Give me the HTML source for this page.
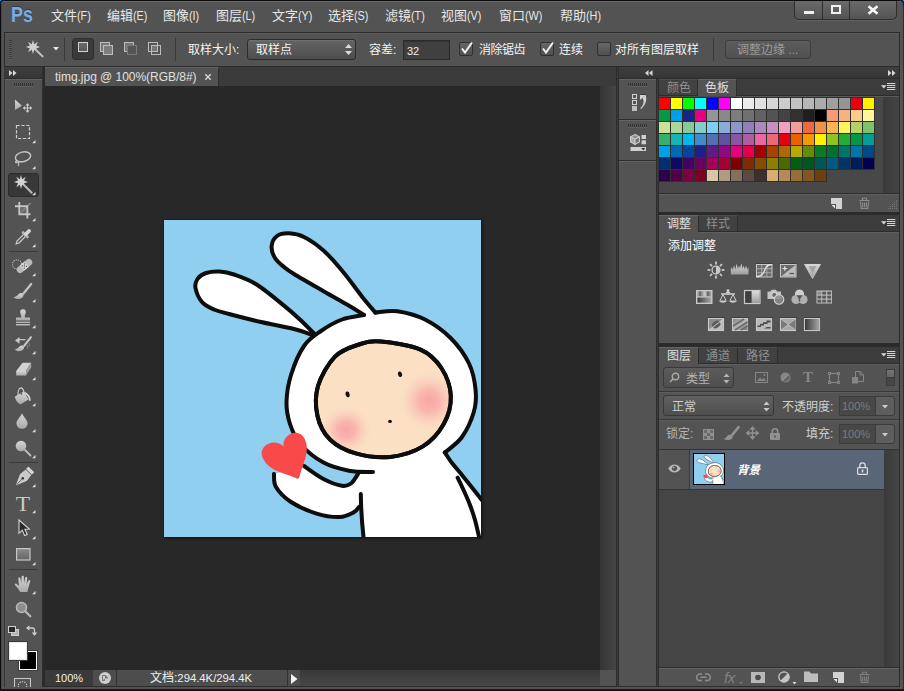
<!DOCTYPE html>
<html><head><meta charset="utf-8"><title>Photoshop</title>
<style>
*{box-sizing:border-box;margin:0;padding:0}
html,body{width:904px;height:691px;overflow:hidden;background:#535353}
body{position:relative;font-family:"Liberation Sans","Noto Sans CJK SC",sans-serif;font-size:12px;color:#e4e4e4}
.a{position:absolute}
.t{position:absolute;white-space:nowrap;line-height:16px;height:16px;margin-top:1px}
.o{color:#f4f4f4;margin-left:1px}
.m{position:absolute;white-space:nowrap;line-height:18px;height:18px;font-size:13px;color:#e8e8e8;top:7px}
.m i{font-style:normal;display:inline-block;font-size:13.5px;transform:scaleX(.8);transform-origin:0 50%;margin-right:-3px}
svg{position:absolute;overflow:visible}
.sel{border:1px solid #2b2b2b;border-radius:3px;background:linear-gradient(#656565,#4d4d4d);box-shadow:inset 0 1px 0 #707070}
.inp{border:1px solid #2b2b2b;background:#404040;box-shadow:inset 0 1px 1px #333}
.cb{width:14px;height:14px;border:1px solid #303030;border-radius:2px;background:linear-gradient(#666,#505050)}
.tabrow{background:#3c3c3c;border-bottom:1px solid #2d2d2d}
.tabon{background:#535353;border-right:1px solid #2d2d2d;border-top:1px solid #656565}
.taboff{background:#414141;border-right:1px solid #2d2d2d;border-bottom:1px solid #2d2d2d;border-top:1px solid #4c4c4c}
.tl{color:#e0e0e0}
.tg{color:#8f8f8f}
.hl{background:#646464;height:1px}
.dk{background:#2d2d2d}
</style></head><body>
<div class="a" style="left:0;top:0;width:904px;height:1px;background:#0a0a0a"></div>
<div class="a" style="left:0;top:0;width:1px;height:691px;background:#0a0a0a"></div>
<div class="a" style="left:903px;top:0;width:1px;height:691px;background:#2e2e2e"></div>
<div class="a" style="left:0;top:689px;width:904px;height:2px;background:#161616"></div>
<div class="a" style="left:1px;top:1px;width:902px;height:1px;background:#6a6a6a"></div>
<div class="a" style="left:1px;top:2px;width:1px;height:687px;background:#484848"></div>
<svg style="left:0;top:0" width="6" height="6"><path d="M0,0H5L0,5Z" fill="#1f8ce6"/><path d="M0,5 A5,5 0 0 1 5,0" fill="none" stroke="#101010" stroke-width="1.6"/></svg>
<svg style="left:898px;top:0" width="6" height="6"><path d="M6,0H1L6,5Z" fill="#1f8ce6"/><path d="M6,5 A5,5 0 0 0 1,0" fill="none" stroke="#101010" stroke-width="1.6"/></svg>
<div class="t" style="left:11px;top:1px;height:26px;line-height:26px;font-size:22px;font-weight:bold;color:#79ade6;transform:scaleX(.81);transform-origin:0 0;text-shadow:0 -1px 0 #2b3a4a">Ps</div>
<div class="m" style="left:51px">文件<i>(F)</i></div>
<div class="m" style="left:107px">编辑<i>(E)</i></div>
<div class="m" style="left:163px">图像<i>(I)</i></div>
<div class="m" style="left:216px">图层<i>(L)</i></div>
<div class="m" style="left:272px">文字<i>(Y)</i></div>
<div class="m" style="left:328px">选择<i>(S)</i></div>
<div class="m" style="left:385px">滤镜<i>(T)</i></div>
<div class="m" style="left:441px">视图<i>(V)</i></div>
<div class="m" style="left:499px">窗口<i>(W)</i></div>
<div class="m" style="left:560px">帮助<i>(H)</i></div>
<div class="a" style="left:794px;top:1px;width:103px;height:19px;border:1px solid #2c2c2c;border-top:none;border-radius:0 0 5px 5px;background:linear-gradient(#6a6a6a,#545454);box-shadow:0 1px 0 #626262"></div>
<div class="a dk" style="left:822px;top:1px;width:1px;height:18px"></div><div class="a dk" style="left:849px;top:1px;width:1px;height:18px"></div>
<div class="a" style="left:804px;top:11px;width:10px;height:3px;background:#f0f0f0"></div>
<div class="a" style="left:831px;top:5px;width:10px;height:9px;border:2px solid #f0f0f0;border-top-width:2px"></div>
<svg style="left:867px;top:5px" width="12" height="10"><path d="M1.5,1.3L10.5,8.7M10.5,1.3L1.5,8.7" stroke="#f4f4f4" stroke-width="2.6"/></svg>
<div class="a" style="left:4px;top:32px;width:896px;height:35px;background:#535353;border:1px solid #2b2b2b;box-shadow:inset 0 1px 0 #5e5e5e"></div>
<div class="a" style="left:9px;top:40px;width:3px;height:20px;background:repeating-linear-gradient(#3a3a3a 0 1px,#5e5e5e 1px 2px)"></div>
<svg style="left:26px;top:40px" width="19" height="19"><g fill="#cfcfcf" stroke="none"><path d="M7,0L8.3,4.2L12,1.8L10.2,5.6L14,7L10.2,8.4L12,12.2L8.3,9.8L7,14L5.7,9.8L2,12.2L3.8,8.4L0,7L3.8,5.6L2,1.8L5.7,4.2Z"/></g><path d="M10.5,10.5L16.6,16.4" stroke="#c4c4c4" stroke-width="2" stroke-linecap="round"/></svg>
<svg style="left:53px;top:47px" width="6" height="4"><path d="M0,0H6L3,3.6Z" fill="#e8e8e8"/></svg>
<div class="a" style="left:64px;top:38px;width:1px;height:23px;background:#3a3a3a"></div>
<div class="a" style="left:72px;top:38px;width:22px;height:22px;background:#3a3a3a;border:1px solid #2f2f2f;border-radius:3px"></div>
<div class="a" style="left:78px;top:42px;width:10px;height:10px;border:1px solid #d0d0d0;background:linear-gradient(#6a6a6a,#585858)"></div>
<div class="a" style="left:100px;top:42px;width:10px;height:10px;border:1px solid #bdbdbd;background:#777"></div><div class="a" style="left:103px;top:45px;width:10px;height:10px;border:1px solid #bdbdbd;background:#7d7d7d"></div>
<div class="a" style="left:124px;top:42px;width:10px;height:10px;border:1px solid #bdbdbd;background:#777"></div><div class="a" style="left:127px;top:45px;width:10px;height:10px;border:1px solid #7a7a7a;background:#555"></div>
<div class="a" style="left:148px;top:42px;width:10px;height:10px;border:1px solid #bdbdbd;background:#555"></div><div class="a" style="left:151px;top:45px;width:10px;height:10px;border:1px solid #bdbdbd;background:transparent"></div><div class="a" style="left:152px;top:46px;width:5px;height:5px;background:#777"></div>
<div class="a" style="left:175px;top:38px;width:1px;height:23px;background:#3a3a3a"></div>
<div class="t o" style="left:187px;top:41px">取样大小:</div>
<div class="a sel" style="left:247px;top:39px;width:109px;height:21px"></div>
<div class="t o" style="left:255px;top:41px">取样点</div>
<svg style="left:345px;top:44px" width="7" height="11"><path d="M0,4L3.5,0L7,4ZM0,7L3.5,11L7,7Z" fill="#dcdcdc"/></svg>
<div class="t o" style="left:368px;top:41px">容差:</div>
<div class="a inp" style="left:403px;top:40px;width:47px;height:20px"></div>
<div class="t" style="left:407px;top:42px;font-size:11px;color:#f0f0f0">32</div>
<div class="a cb" style="left:459px;top:42px"></div>
<svg style="left:459px;top:42px" width="14" height="14"><path d="M3,6.5L6,10.5L13,0.5" fill="none" stroke="#f2f2f2" stroke-width="2"/></svg>
<div class="a cb" style="left:540px;top:42px"></div>
<svg style="left:540px;top:42px" width="14" height="14"><path d="M3,6.5L6,10.5L13,0.5" fill="none" stroke="#f2f2f2" stroke-width="2"/></svg>
<div class="a cb" style="left:597px;top:42px"></div>
<div class="t o" style="left:478px;top:41px;letter-spacing:-0.5px">消除锯齿</div>
<div class="t o" style="left:558px;top:41px">连续</div>
<div class="t o" style="left:614px;top:41px">对所有图层取样</div>
<div class="a" style="left:713px;top:38px;width:1px;height:23px;background:#3a3a3a"></div>
<div class="a" style="left:725px;top:40px;width:86px;height:19px;border:1px solid #3d3d3d;border-radius:3px;background:linear-gradient(#5c5c5c,#505050)"></div>
<div class="t" style="left:737px;top:41px;color:#9b9b9b">调整边缘 ...</div>
<div class="a" style="left:4px;top:67px;width:39px;height:620px;background:#535353;border-left:1px solid #353535;border-right:1px solid #303030"></div>
<div class="a" style="left:5px;top:67px;width:37px;height:11px;background:linear-gradient(#3e3e3e,#353535)"></div>
<div class="a dk" style="left:5px;top:78px;width:37px;height:1px"></div><div class="a hl" style="left:5px;top:79px;width:37px"></div>
<svg style="left:9px;top:70px" width="8" height="6"><path d="M0,0L3.5,3L0,6ZM4,0L7.5,3L4,6Z" fill="#d8d8d8"/></svg>
<div class="a" style="left:14px;top:83px;width:20px;height:3px;background:repeating-linear-gradient(90deg,#333 0 1px,#535353 1px 2px)"></div>
<div class="a" style="left:14px;top:86px;width:20px;height:1px;background:repeating-linear-gradient(90deg,#6a6a6a 0 1px,#535353 1px 2px)"></div>
<defs></defs>
<svg width="0" height="0" style="left:0;top:0"><defs><linearGradient id="tg" x1="0" y1="0" x2="0" y2="1"><stop offset="0" stop-color="#d6d6d6"/><stop offset="1" stop-color="#a9a9a9"/></linearGradient><linearGradient id="tg2" x1="0" y1="0" x2="0" y2="1"><stop offset="0" stop-color="#8a8a8a"/><stop offset="1" stop-color="#666"/></linearGradient></defs></svg>
<svg style="left:14px;top:99px" width="22" height="15"><path d="M1,0.5V11L8,6.8Z" fill="url(#tg)"/><g fill="#d0d0d0"><path d="M13.5,4.2L15.6,6.6H11.4ZM13.5,13.8L15.6,11.4H11.4ZM8.7,9L11.1,6.9V11.1ZM18.3,9L15.9,6.9V11.1Z"/></g><path d="M13.5,6V12M10.5,9H16.5" stroke="#d0d0d0" stroke-width="1.1"/></svg>
<svg style="left:16px;top:125px" width="15" height="15"><rect x="0.5" y="0.5" width="13" height="13" fill="none" stroke="#cfcfcf" stroke-width="1.2" stroke-dasharray="3.2 1.7"/></svg>
<svg style="left:31.7px;top:140px" width="4" height="4"><path d="M3.5,0V3.3H0.1Z" fill="#dcdcdc"/></svg>
<svg style="left:13px;top:150px" width="20" height="18"><ellipse cx="10" cy="6.8" rx="7.8" ry="4.8" fill="none" stroke="#c4c4c4" stroke-width="1.5" transform="rotate(-14 10 6.8)"/><path d="M3.8,11.2C2,11.5 2.2,13.2 4,12.6C5.8,12 6.3,13.8 5.2,16" fill="none" stroke="#c4c4c4" stroke-width="1.2"/></svg>
<svg style="left:31.7px;top:166px" width="4" height="4"><path d="M3.5,0V3.3H0.1Z" fill="#dcdcdc"/></svg>
<div class="a" style="left:8px;top:173px;width:31px;height:24px;background:#383838;border:1px solid #2c2c2c;border-radius:3px"></div>
<svg style="left:14px;top:175px" width="21" height="21"><path d="M7,0L8.2,4.3L11.7,1.7L10,5.6L14,7L10,8.3L11.7,12.3L8.2,9.7L7,14L5.8,9.7L2.3,12.3L4,8.3L0,7L4,5.6L2.3,1.7L5.8,4.3Z" fill="#d2d2d2"/><path d="M10.5,10.5L17.6,17.6" stroke="#b4b4b4" stroke-width="2.2" stroke-linecap="round"/></svg>
<svg style="left:31.7px;top:192px" width="4" height="4"><path d="M3.5,0V3.3H0.1Z" fill="#dcdcdc"/></svg>
<svg style="left:15px;top:202px" width="16" height="17"><path d="M4.3,0V12.3H15.5M0,4.3H12.3V16.5" fill="none" stroke="#c6c6c6" stroke-width="1.9"/><path d="M15.5,1L6,10.5" stroke="#bdbdbd" stroke-width="1"/><rect x="5.8" y="5.8" width="5" height="5" fill="#6e6e6e"/><path d="M10.5,6L6,10.5" stroke="#a0a0a0" stroke-width=".8"/></svg>
<svg style="left:31.7px;top:218px" width="4" height="4"><path d="M3.5,0V3.3H0.1Z" fill="#dcdcdc"/></svg>
<svg style="left:15px;top:228px" width="17" height="17"><path d="M1.2,15.8L2,13L9,6L11,8L4,15Z" fill="none" stroke="#cdcdcd" stroke-width="1.2"/><path d="M8,4.5L12.5,9" stroke="#b5b5b5" stroke-width="2.6" stroke-linecap="round"/><path d="M11,6L14,3" stroke="#d6d6d6" stroke-width="3.8" stroke-linecap="round"/></svg>
<svg style="left:31.7px;top:244px" width="4" height="4"><path d="M3.5,0V3.3H0.1Z" fill="#dcdcdc"/></svg>
<div class="a" style="left:9px;top:251px;width:29px;height:1px;background:#3b3b3b"></div>
<div class="a" style="left:9px;top:462px;width:29px;height:1px;background:#3b3b3b"></div>
<div class="a" style="left:9px;top:569px;width:29px;height:1px;background:#3b3b3b"></div>
<svg style="left:11px;top:258px" width="22" height="16"><circle cx="6" cy="6.5" r="4.6" fill="none" stroke="#d0d0d0" stroke-width="1.1" stroke-dasharray="1 1.2"/><g transform="rotate(-40 13.5 8)"><rect x="4.5" y="4.6" width="18" height="6.8" rx="3.2" fill="#b9b9b9"/><rect x="10.5" y="4.6" width="6" height="6.8" fill="#d6d6d6"/><g fill="#666"><circle cx="12" cy="6.5" r=".7"/><circle cx="15" cy="6.5" r=".7"/><circle cx="12" cy="9.5" r=".7"/><circle cx="15" cy="9.5" r=".7"/><circle cx="13.5" cy="8" r=".7"/></g></g></svg>
<svg style="left:31.7px;top:273px" width="4" height="4"><path d="M3.5,0V3.3H0.1Z" fill="#dcdcdc"/></svg>
<svg style="left:13px;top:283px" width="20" height="17"><path d="M18.2,1L10.5,10.5" stroke="#c4c4c4" stroke-width="2.2" stroke-linecap="round"/><path d="M0.5,14.2C3,13.8 4.5,12.5 5.8,11C7.3,9.3 9.8,9.6 10.5,11.8C10.8,14.5 7.5,16.3 4.5,16C2.8,15.8 1.3,15 0.5,14.2Z" fill="url(#tg)"/></svg>
<svg style="left:31.7px;top:299px" width="4" height="4"><path d="M3.5,0V3.3H0.1Z" fill="#dcdcdc"/></svg>
<svg style="left:15px;top:309px" width="16" height="17"><path d="M8,0.3C10.3,0.3 11.2,2 10.8,3.8C10.4,5.3 9.8,6 9.8,8.5H15V11.5H1V8.5H6.2C6.2,6 5.6,5.3 5.2,3.8C4.8,2 5.7,0.3 8,0.3Z" fill="url(#tg)"/><rect x="1" y="12.7" width="14" height="1.2" fill="#c4c4c4"/><rect x="1" y="15" width="14" height="1.4" fill="#c4c4c4"/></svg>
<svg style="left:31.7px;top:325px" width="4" height="4"><path d="M3.5,0V3.3H0.1Z" fill="#dcdcdc"/></svg>
<svg style="left:14px;top:336px" width="20" height="17"><path d="M17,1.2L10,10" stroke="#c4c4c4" stroke-width="2.1" stroke-linecap="round"/><path d="M0.8,13.5C3,13.2 4.3,12 5.5,10.6C7,9 9.3,9.3 10,11.3C10.3,13.8 7.2,15.5 4.3,15.2C2.8,15 1.5,14.3 0.8,13.5Z" fill="url(#tg)"/><path d="M1,4.5L5.5,1V3H11.5V4.2H5.5V7.8Z" fill="#c6c6c6"/><path d="M13.5,9.5V13M15.3,7.5V11.5" stroke="#b0b0b0" stroke-width="0.9" stroke-dasharray="1 1"/></svg>
<svg style="left:31.7px;top:351px" width="4" height="4"><path d="M3.5,0V3.3H0.1Z" fill="#dcdcdc"/></svg>
<svg style="left:15px;top:362px" width="17" height="15"><path d="M7.5,0.8H16.2L11,9H1.2Z" fill="#d2d2d2"/><path d="M1.2,9H11V13.6H1.2Z" fill="url(#tg)"/><path d="M11,9L16.2,0.8V5.5L11,13.6Z" fill="#9d9d9d"/></svg>
<svg style="left:31.7px;top:377px" width="4" height="4"><path d="M3.5,0V3.3H0.1Z" fill="#dcdcdc"/></svg>
<svg style="left:14px;top:387px" width="19" height="18"><path d="M4.2,9.3C3.6,5 4.6,1.2 6.8,0.8C9,0.6 10,4 10,6.8" fill="none" stroke="#cfcfcf" stroke-width="1.2"/><path d="M1,9.6L9.8,4.6L14.6,12.6L6.6,17.2C4.5,17.6 0.6,12 1,9.6Z" fill="url(#tg)"/><path d="M10,4.7C13.5,5.8 16.3,8.5 16.6,12.5C16.8,14.3 15.3,14.6 15,13C14.8,10.6 13.6,8.6 11.6,7.4Z" fill="#d8d8d8"/><circle cx="7.4" cy="6.8" r="0.9" fill="#555"/></svg>
<svg style="left:31.7px;top:403px" width="4" height="4"><path d="M3.5,0V3.3H0.1Z" fill="#dcdcdc"/></svg>
<svg style="left:16px;top:413px" width="12" height="16"><path d="M6,0.3C7.5,4 11.6,7 11.6,10.6A5.6,5.2 0 0 1 0.4,10.6C0.4,7 4.5,4 6,0.3Z" fill="url(#tg)"/></svg>
<svg style="left:31.7px;top:429px" width="4" height="4"><path d="M3.5,0V3.3H0.1Z" fill="#dcdcdc"/></svg>
<svg style="left:15px;top:440px" width="17" height="17"><circle cx="6" cy="6" r="5.3" fill="url(#tg)"/><path d="M10,10L15.5,15.5" stroke="#bcbcbc" stroke-width="1.8" stroke-linecap="round"/></svg>
<svg style="left:31.7px;top:455px" width="4" height="4"><path d="M3.5,0V3.3H0.1Z" fill="#dcdcdc"/></svg>
<svg style="left:14px;top:468px" width="19" height="18"><g transform="translate(-0.5,0.5) rotate(44 11 7) scale(1.06)"><rect x="7.2" y="-2" width="7.6" height="3.2" rx=".6" fill="#d4d4d4"/><path d="M7.6,2.2H14.4L15.2,8.5L11,18.2L6.8,8.5Z" fill="#c9c9c9" stroke="#e0e0e0" stroke-width=".6"/><path d="M11,18V10.5" stroke="#666" stroke-width=".8"/><circle cx="11" cy="9.6" r="1.2" fill="#333"/></g></svg>
<svg style="left:31.7px;top:484px" width="4" height="4"><path d="M3.5,0V3.3H0.1Z" fill="#dcdcdc"/></svg>
<div class="t" style="left:15px;top:492px;width:16px;height:22px;line-height:22px;font-family:'Liberation Serif',serif;font-size:21px;color:#c9c9c9;text-align:center;transform:scaleX(1.12)">T</div>
<svg style="left:31.7px;top:510px" width="4" height="4"><path d="M3.5,0V3.3H0.1Z" fill="#dcdcdc"/></svg>
<svg style="left:18px;top:519px" width="12" height="18"><path d="M1,1V14.3L4.3,11.2L6.6,16.6L9.2,15.5L6.9,10.2L11.3,10Z" fill="#2a2a2a" stroke="#d6d6d6" stroke-width="1.1" stroke-linejoin="miter"/></svg>
<svg style="left:31.7px;top:536px" width="4" height="4"><path d="M3.5,0V3.3H0.1Z" fill="#dcdcdc"/></svg>
<svg style="left:16px;top:548px" width="15" height="14"><rect x="0.6" y="0.6" width="13.4" height="11.4" fill="url(#tg2)" stroke="#c6c6c6" stroke-width="1.2"/></svg>
<svg style="left:31.7px;top:562px" width="4" height="4"><path d="M3.5,0V3.3H0.1Z" fill="#dcdcdc"/></svg>
<svg style="left:14px;top:575px" width="18" height="18"><path d="M6.2,17C5,14.5 2.6,12 0.9,10C0.2,8.8 1.6,7.8 2.8,8.9L5,11L4.3,3.6C4.2,2.2 6.2,2 6.4,3.5L7.2,8.3L7.6,1.8C7.7,0.3 9.8,0.3 9.8,1.8L10,8.3L11.2,2.8C11.5,1.4 13.4,1.7 13.2,3.2L12.6,9L14.4,5.6C15,4.4 16.8,5 16.2,6.6C15.2,9.6 14.6,12.5 13.4,17Z" fill="url(#tg)"/></svg>
<svg style="left:31.7px;top:591px" width="4" height="4"><path d="M3.5,0V3.3H0.1Z" fill="#dcdcdc"/></svg>
<svg style="left:15px;top:601px" width="17" height="17"><circle cx="6.5" cy="6.5" r="5" fill="#8e8e8e" stroke="#b9b9b9" stroke-width="1.6"/><path d="M10.5,10.5L15.3,15.3" stroke="#b9b9b9" stroke-width="2.2" stroke-linecap="round"/></svg>
<svg style="left:8px;top:626px" width="11" height="10"><rect x="3.5" y="3.5" width="7" height="6" fill="#b4b4b4" stroke="#cfcfcf"/><rect x="0.5" y="0.5" width="7" height="6" fill="#2b2b2b" stroke="#cfcfcf"/></svg>
<svg style="left:26px;top:625px" width="11" height="11"><path d="M2.5,3H6.5C8,3 8.5,3.8 8.5,5V8.5" fill="none" stroke="#cdcdcd" stroke-width="1.3"/><path d="M0,3L3.4,0.3V5.7Z" fill="#cdcdcd"/><path d="M8.5,11L5.8,7.6H11.2Z" fill="#cdcdcd"/></svg>
<div class="a" style="left:19px;top:651px;width:18px;height:19px;background:#000;border:1px solid #fff;outline:1px solid #3a3a3a"></div>
<div class="a" style="left:9px;top:642px;width:18px;height:18px;background:#fff;border:1px solid #e8e8e8;outline:1px solid #3a3a3a"></div>
<svg style="left:14px;top:678px;overflow:hidden" width="17" height="9"><rect x="0.5" y="0.5" width="16" height="10" fill="none" stroke="#c6c6c6" stroke-width="1.1"/><circle cx="8.5" cy="8" r="4.3" fill="none" stroke="#d0d0d0" stroke-width="1.1" stroke-dasharray="1.2 1.2"/></svg>
<div class="a" style="left:43px;top:67px;width:573px;height:19px;background:#3b3b3b"></div>
<div class="a" style="left:43px;top:67px;width:2px;height:620px;background:#2a2a2a"></div>
<div class="a" style="left:45px;top:67px;width:174px;height:19px;background:#535353;border-top:1px solid #636363;border-right:1px solid #2e2e2e"></div>
<div class="t" style="left:55px;top:68px;color:#e0e0e0;letter-spacing:-0.03px">timg.jpg @ 100%(RGB/8#)</div>
<svg style="left:205px;top:74px" width="6" height="6"><path d="M0.3,0.3L5.7,5.7M5.7,0.3L0.3,5.7" stroke="#dcdcdc" stroke-width="1.3"/></svg>
<div class="a" style="left:45px;top:86px;width:555px;height:584px;background:#282828"></div>
<div class="a" style="left:600px;top:86px;width:16px;height:584px;background:linear-gradient(90deg,#353535,#454545)"></div>
<div class="a" style="left:164px;top:220px;width:317px;height:317px;box-shadow:1px 1px 3px rgba(0,0,0,.6),0 0 1px #111"></div>
<svg style="left:164px;top:220px;overflow:hidden" width="317" height="317" viewBox="0 0 317 317"><defs><radialGradient id="bl"><stop offset="0" stop-color="#f8a3a3" stop-opacity=".95"/><stop offset=".35" stop-color="#f9aaa8" stop-opacity=".8"/><stop offset=".7" stop-color="#fac0b4" stop-opacity=".4"/><stop offset="1" stop-color="#fad6c0" stop-opacity="0"/></radialGradient><g id="bunny"><rect width="317" height="317" fill="#90cff0"/><path d="M197,272L199,317H317V279L296.8,253.6L281,232L209,245Z" fill="#fff"/><path d="M140.0,246.0 L159.5,259.0 L178.0,265.8 L187.0,263.5 L194.0,254.0 L210.0,254.0 L200.0,288.0 L195.4,286.6 L189.6,292.4 L175.7,297.0 L152.6,293.6 L127.0,282.0 L112.0,267.0 L110.0,254.0Z" fill="#fff"/><path d="M209.0,252.0 L185.0,250.7 L159.5,242.6 L136.4,224.0 L126.0,204.0 L122.5,182.0 L127.0,155.0 L140.0,126.0 L157.0,111.0 L178.0,99.5 L200.0,95.0 L203.0,88.0 L209.0,87.0 L211.4,92.6 L233.4,91.2 L261.0,99.5 L286.6,118.0 L305.0,143.5 L311.6,170.0 L309.8,192.0 L298.0,217.0 L280.8,232.5Z" fill="#fff"/><path d="M152.5,116.0C149.9,113.4 142.4,105.6 137.0,100.5C131.6,95.4 127.4,91.6 120.0,85.6C112.6,79.6 100.9,69.7 92.6,64.5C84.3,59.3 76.2,56.7 70.0,54.5C63.8,52.3 60.2,51.8 55.5,51.5C50.8,51.2 45.7,51.8 42.0,53.0C38.3,54.2 35.2,56.5 33.5,59.0C31.8,61.5 30.8,64.2 31.5,68.0C32.2,71.8 34.9,78.4 38.0,82.0C41.1,85.6 45.5,87.5 50.0,89.5C54.5,91.5 57.2,91.9 65.0,94.0C72.8,96.1 86.2,99.5 97.0,102.0C107.8,104.5 121.0,106.7 130.0,109.0C139.0,111.3 147.5,114.8 151.0,116.0Z" fill="#fff" stroke="#0d0d0d" stroke-width="4" stroke-linejoin="round"/><path d="M211.4,92.6C209.3,90.1 203.9,84.1 198.7,77.5C193.5,70.9 186.4,60.8 180.0,53.0C173.6,45.2 166.7,37.0 160.0,31.0C153.3,25.0 145.8,19.9 140.0,17.0C134.2,14.1 129.5,13.5 125.0,13.3C120.5,13.1 115.9,13.9 113.0,16.0C110.1,18.1 107.9,22.3 107.6,26.0C107.3,29.7 108.9,34.5 111.0,38.0C113.1,41.5 116.8,44.3 120.0,47.0C123.2,49.7 123.3,49.9 130.0,54.0C136.7,58.1 151.2,66.4 160.0,71.5C168.8,76.6 176.3,80.6 183.0,84.5C189.7,88.4 197.2,93.2 200.0,95.0" fill="#fff" stroke="#0d0d0d" stroke-width="4" stroke-linejoin="round" stroke-linecap="round"/><path d="M199,97.5L212,95L215,110L190,112Z" fill="#fff"/><path d="M151,114L158,108L175,125L150,130Z" fill="#fff"/><path d="M200.0,95.0C196.3,95.8 185.2,96.8 178.0,99.5C170.8,102.2 163.3,106.6 157.0,111.0C150.7,115.4 145.0,118.7 140.0,126.0C135.0,133.3 129.9,145.7 127.0,155.0C124.1,164.3 122.7,173.8 122.5,182.0C122.3,190.2 123.7,197.0 126.0,204.0C128.3,211.0 130.8,217.6 136.4,224.0C142.0,230.4 151.4,238.2 159.5,242.6C167.6,247.0 176.8,249.1 185.0,250.7C193.2,252.3 205.0,251.8 209.0,252.0" fill="none" stroke="#0d0d0d" stroke-width="4" stroke-linecap="round" stroke-linejoin="round"/><path d="M211.4,92.6C215.1,92.4 225.1,90.0 233.4,91.2C241.7,92.4 252.1,95.0 261.0,99.5C269.9,104.0 279.3,110.7 286.6,118.0C293.9,125.3 300.8,134.8 305.0,143.5C309.2,152.2 310.8,161.9 311.6,170.0C312.4,178.1 312.1,184.2 309.8,192.0C307.5,199.8 302.8,210.2 298.0,217.0C293.2,223.8 283.7,229.9 280.8,232.5" fill="none" stroke="#0d0d0d" stroke-width="4" stroke-linecap="round" stroke-linejoin="round"/><path d="M140.0,246.0C143.2,248.2 153.2,255.7 159.5,259.0C165.8,262.3 173.4,265.1 178.0,265.8C182.6,266.6 184.3,265.5 187.0,263.5C189.7,261.5 192.8,255.6 194.0,254.0" fill="none" stroke="#0d0d0d" stroke-width="4" stroke-linecap="round" stroke-linejoin="round"/><path d="M110.0,254.0C110.3,256.2 109.2,262.3 112.0,267.0C114.8,271.7 120.2,277.6 127.0,282.0C133.8,286.4 144.5,291.1 152.6,293.6C160.7,296.1 169.5,297.2 175.7,297.0C181.9,296.8 186.3,294.1 189.6,292.4C192.9,290.7 194.4,287.6 195.4,286.6" fill="none" stroke="#0d0d0d" stroke-width="4" stroke-linecap="round" stroke-linejoin="round"/><path d="M196.8,274C197,288 197.8,302 199.5,317" fill="none" stroke="#0d0d0d" stroke-width="4" stroke-linecap="round" stroke-linejoin="round"/><path d="M280.8,232.5C282.0,234.2 285.3,239.5 288.0,243.0C290.7,246.5 293.8,249.9 296.8,253.6C299.8,257.3 302.3,260.4 306.0,265.0C309.7,269.6 316.8,278.8 319.0,281.5" fill="none" stroke="#0d0d0d" stroke-width="4" stroke-linecap="round" stroke-linejoin="round"/><path d="M293.6,257.7C294.7,259.9 297.9,266.4 300.0,271.0C302.1,275.6 304.2,280.2 306.0,285.0C307.8,289.8 309.4,294.3 311.0,300.0C312.6,305.7 314.8,315.8 315.5,319.0" fill="none" stroke="#0d0d0d" stroke-width="4" stroke-linecap="round" stroke-linejoin="round"/><path d="M217.0,121.5C227.2,122.3 246.4,125.2 256.5,129.6C266.6,134.0 272.3,140.3 277.4,148.0C282.4,155.7 286.4,166.7 286.8,176.0C287.2,185.3 284.4,195.6 279.7,204.0C275.0,212.4 267.8,220.9 258.9,226.4C250.0,231.9 237.6,235.7 226.4,236.9C215.2,238.1 201.8,236.3 191.7,233.4C181.6,230.5 172.4,225.7 166.0,219.5C159.6,213.3 155.5,204.9 153.5,196.0C151.5,187.1 151.1,175.9 154.0,166.0C156.9,156.1 164.2,143.5 171.0,136.6C177.8,129.7 187.3,127.0 195.0,124.5C202.7,122.0 206.8,120.7 217.0,121.5Z" fill="#fbe0c4" stroke="#0d0d0d" stroke-width="4"/><clipPath id="fc"><path d="M217.0,121.5C227.2,122.3 246.4,125.2 256.5,129.6C266.6,134.0 272.3,140.3 277.4,148.0C282.4,155.7 286.4,166.7 286.8,176.0C287.2,185.3 284.4,195.6 279.7,204.0C275.0,212.4 267.8,220.9 258.9,226.4C250.0,231.9 237.6,235.7 226.4,236.9C215.2,238.1 201.8,236.3 191.7,233.4C181.6,230.5 172.4,225.7 166.0,219.5C159.6,213.3 155.5,204.9 153.5,196.0C151.5,187.1 151.1,175.9 154.0,166.0C156.9,156.1 164.2,143.5 171.0,136.6C177.8,129.7 187.3,127.0 195.0,124.5C202.7,122.0 206.8,120.7 217.0,121.5Z"/></clipPath><g clip-path="url(#fc)"><ellipse cx="265" cy="181" rx="30" ry="30" fill="url(#bl)"/><ellipse cx="182" cy="210" rx="26" ry="24" fill="url(#bl)"/></g><path d="M217.0,121.5C227.2,122.3 246.4,125.2 256.5,129.6C266.6,134.0 272.3,140.3 277.4,148.0C282.4,155.7 286.4,166.7 286.8,176.0C287.2,185.3 284.4,195.6 279.7,204.0C275.0,212.4 267.8,220.9 258.9,226.4C250.0,231.9 237.6,235.7 226.4,236.9C215.2,238.1 201.8,236.3 191.7,233.4C181.6,230.5 172.4,225.7 166.0,219.5C159.6,213.3 155.5,204.9 153.5,196.0C151.5,187.1 151.1,175.9 154.0,166.0C156.9,156.1 164.2,143.5 171.0,136.6C177.8,129.7 187.3,127.0 195.0,124.5C202.7,122.0 206.8,120.7 217.0,121.5Z" fill="none" stroke="#0d0d0d" stroke-width="4"/><ellipse cx="183.6" cy="174.4" rx="2" ry="2.9" fill="#111" transform="rotate(-12 183.6 174.4)"/><ellipse cx="236" cy="154.2" rx="2" ry="2.8" fill="#111" transform="rotate(-15 236 154.2)"/><ellipse cx="226" cy="201.4" rx="1.9" ry="1.6" fill="#111"/><path transform="translate(119.5,226.6) rotate(-24)" d="M0,0C-3,-11.5 -23.5,-13 -23.5,2.5C-23.5,17 -8,25.5 -1,34.5Q0.5,36 2,34.5C9,25 22.5,16 22.5,2.5C22.5,-12.5 3,-11.5 0,0Z" fill="#f94a4a"/></g></defs><use href="#bunny"/></svg>
<div class="a" style="left:45px;top:670px;width:571px;height:16px;background:linear-gradient(#393939,#474747)"></div>
<div class="a" style="left:45px;top:670px;width:48px;height:16px;background:#3a3a3a"></div>
<div class="a" style="left:93px;top:670px;width:23px;height:16px;background:#4d4d4d"></div>
<div class="a" style="left:116px;top:670px;width:1px;height:16px;background:#333"></div>
<div class="a" style="left:117px;top:670px;width:170px;height:16px;background:#4d4d4d"></div>
<div class="a" style="left:287px;top:670px;width:1px;height:16px;background:#333"></div>
<div class="a" style="left:288px;top:670px;width:12px;height:16px;background:#4d4d4d"></div>
<div class="a" style="left:600px;top:670px;width:16px;height:16px;background:#535353"></div>
<div class="a" style="left:45px;top:686px;width:571px;height:1px;background:#2b2b2b"></div>
<div class="t" style="left:55px;top:669px;font-size:11px;color:#f0f0f0">100%</div>
<svg style="left:99px;top:672px" width="12" height="12"><circle cx="6" cy="6" r="6" fill="#cdcdcd"/><path d="M3,9V3H6.5L9,5.5V6.5H6V9Z" fill="#7a7a7a"/><path d="M4,8V4H6V6.5" fill="#cdcdcd"/></svg>
<div class="t" style="left:150px;top:669px;color:#f0f0f0">文档:<span style="font-size:11.3px">294.4K/294.4K</span></div>
<svg style="left:291px;top:674px" width="7" height="10"><path d="M0,0L6.5,5L0,10Z" fill="#f4f4f4"/></svg>
<div class="a" style="left:616px;top:67px;width:3px;height:620px;background:linear-gradient(90deg,#2c2c2c 0 1px,#3b3b3b 1px 2px,#2c2c2c 2px)"></div>
<div class="a" style="left:619px;top:67px;width:281px;height:11px;background:linear-gradient(#3f3f3f,#353535)"></div>
<div class="a dk" style="left:619px;top:78px;width:281px;height:1px"></div>
<svg style="left:645px;top:70px" width="8" height="6"><path d="M3.5,0L0,3L3.5,6ZM7.5,0L4,3L7.5,6Z" fill="#d8d8d8"/></svg>
<svg style="left:888px;top:70px" width="8" height="6"><path d="M0,0L3.5,3L0,6ZM4,0L7.5,3L4,6Z" fill="#d8d8d8"/></svg>
<div class="a" style="left:656px;top:79px;width:3px;height:608px;background:linear-gradient(90deg,#2c2c2c 0 1px,#3b3b3b 1px 2px,#2c2c2c 2px)"></div>
<div class="a" style="left:899px;top:67px;width:1px;height:620px;background:#2b2b2b"></div>
<div class="a hl" style="left:619px;top:79px;width:37px"></div>
<div class="a dk" style="left:619px;top:119px;width:37px;height:1px"></div><div class="a hl" style="left:619px;top:120px;width:37px"></div>
<div class="a dk" style="left:619px;top:160px;width:37px;height:1px"></div><div class="a hl" style="left:619px;top:161px;width:37px"></div>
<div class="a" style="left:628px;top:83px;width:20px;height:3px;background:repeating-linear-gradient(90deg,#333 0 1px,#535353 1px 2px)"></div>
<div class="a" style="left:628px;top:86px;width:20px;height:1px;background:repeating-linear-gradient(90deg,#6a6a6a 0 1px,#535353 1px 2px)"></div>
<div class="a" style="left:628px;top:124px;width:20px;height:3px;background:repeating-linear-gradient(90deg,#333 0 1px,#535353 1px 2px)"></div>
<div class="a" style="left:628px;top:127px;width:20px;height:1px;background:repeating-linear-gradient(90deg,#6a6a6a 0 1px,#535353 1px 2px)"></div>
<svg style="left:632px;top:94px" width="15" height="17"><g fill="none" stroke="#d0d0d0" stroke-width="1"><rect x="0.5" y="0.5" width="4" height="4"/><rect x="0.5" y="6.5" width="4" height="4"/></g><rect x="0" y="12" width="5" height="5" fill="#bdbdbd"/><path d="M8,1H13.9L8,6Z" fill="#d2d2d2"/><path d="M13.8,1.1C14.8,5 14.6,10.5 8.9,15.2L8.4,14.3C11.6,10.8 12.6,7 10.4,4Z" fill="#d2d2d2"/><path d="M8,0.5H14" stroke="#333" stroke-width="0.8"/></svg>
<svg style="left:630px;top:134px" width="17" height="18"><path d="M5,0.6L9.4,2.8L5,5.2L0.6,2.8Z" fill="#8e8e8e"/><path d="M0.6,2.8L5,5.2V10.4L0.6,8Z" fill="#a9a9a9"/><path d="M9.4,2.8L5,5.2V10.4L9.4,8Z" fill="#747474"/><g fill="none" stroke="#d0d0d0" stroke-width="1.1"><path d="M5,0.6L9.4,2.8V8L5,10.4L0.6,8V2.8Z"/><path d="M0.6,2.8L5,5.2L9.4,2.8M5,5.2V10.4"/></g><rect x="11.5" y="1" width="4.5" height="4" fill="#cfcfcf"/><rect x="11.5" y="6.3" width="4.5" height="4" fill="#cfcfcf"/><rect x="0.5" y="13" width="15.5" height="4" fill="#cfcfcf"/><path d="M11.5,14L15,14L13.2,16.5Z" fill="#222"/></svg>
<div class="a tabrow" style="left:659px;top:79px;width:240px;height:17px"></div>
<div class="a taboff" style="left:659px;top:79px;width:39px;height:17px"></div>
<div class="a tabon" style="left:698px;top:79px;width:39px;height:17px"></div>
<div class="t tg" style="left:667px;top:79px">颜色</div>
<div class="t tl" style="left:705px;top:79px">色板</div>
<svg style="left:881px;top:83px" width="14" height="9"><path d="M0,2.3H5.6L2.8,5.6Z" fill="#d8d8d8"/><path d="M6,0.5H14.3M6,2.5H14.3M6,4.5H14.3M6,6.5H14.3" stroke="#d4d4d4" stroke-width="1"/></svg>
<div class="a" style="left:659px;top:96px;width:240px;height:97px;background:#484848"></div>
<div class="a hl" style="left:737px;top:96px;width:162px;background:#5a5a5a"></div>
<div class="a" style="left:883px;top:97px;width:16px;height:96px;background:linear-gradient(90deg,#3a3a3a,#444)"></div>
<div class="a" style="left:658px;top:97px;width:217px;height:13px;background:#303030"></div>
<div class="a" style="left:658px;top:109px;width:217px;height:13px;background:#303030"></div>
<div class="a" style="left:658px;top:121px;width:217px;height:13px;background:#303030"></div>
<div class="a" style="left:658px;top:133px;width:217px;height:13px;background:#303030"></div>
<div class="a" style="left:658px;top:145px;width:217px;height:13px;background:#303030"></div>
<div class="a" style="left:658px;top:157px;width:217px;height:13px;background:#303030"></div>
<div class="a" style="left:658px;top:169px;width:169px;height:13px;background:#303030"></div>
<div class="a" style="left:659px;top:98px;width:11px;height:11px;background:#ff0000"></div>
<div class="a" style="left:671px;top:98px;width:11px;height:11px;background:#ffff00"></div>
<div class="a" style="left:683px;top:98px;width:11px;height:11px;background:#00ff00"></div>
<div class="a" style="left:695px;top:98px;width:11px;height:11px;background:#00ffff"></div>
<div class="a" style="left:707px;top:98px;width:11px;height:11px;background:#0000ff"></div>
<div class="a" style="left:719px;top:98px;width:11px;height:11px;background:#ff00ff"></div>
<div class="a" style="left:731px;top:98px;width:11px;height:11px;background:#ffffff"></div>
<div class="a" style="left:743px;top:98px;width:11px;height:11px;background:#ebebeb"></div>
<div class="a" style="left:755px;top:98px;width:11px;height:11px;background:#e1e1e1"></div>
<div class="a" style="left:767px;top:98px;width:11px;height:11px;background:#d7d7d7"></div>
<div class="a" style="left:779px;top:98px;width:11px;height:11px;background:#cccccc"></div>
<div class="a" style="left:791px;top:98px;width:11px;height:11px;background:#c2c2c2"></div>
<div class="a" style="left:803px;top:98px;width:11px;height:11px;background:#b7b7b7"></div>
<div class="a" style="left:815px;top:98px;width:11px;height:11px;background:#acacac"></div>
<div class="a" style="left:827px;top:98px;width:11px;height:11px;background:#a0a0a0"></div>
<div class="a" style="left:839px;top:98px;width:11px;height:11px;background:#959595"></div>
<div class="a" style="left:851px;top:98px;width:11px;height:11px;background:#e60012"></div>
<div class="a" style="left:863px;top:98px;width:11px;height:11px;background:#fff100"></div>
<div class="a" style="left:659px;top:110px;width:11px;height:11px;background:#009944"></div>
<div class="a" style="left:671px;top:110px;width:11px;height:11px;background:#00a0e9"></div>
<div class="a" style="left:683px;top:110px;width:11px;height:11px;background:#1d2088"></div>
<div class="a" style="left:695px;top:110px;width:11px;height:11px;background:#e4007f"></div>
<div class="a" style="left:707px;top:110px;width:11px;height:11px;background:#959595"></div>
<div class="a" style="left:719px;top:110px;width:11px;height:11px;background:#898989"></div>
<div class="a" style="left:731px;top:110px;width:11px;height:11px;background:#7d7d7d"></div>
<div class="a" style="left:743px;top:110px;width:11px;height:11px;background:#707070"></div>
<div class="a" style="left:755px;top:110px;width:11px;height:11px;background:#626262"></div>
<div class="a" style="left:767px;top:110px;width:11px;height:11px;background:#535353"></div>
<div class="a" style="left:779px;top:110px;width:11px;height:11px;background:#434343"></div>
<div class="a" style="left:791px;top:110px;width:11px;height:11px;background:#323232"></div>
<div class="a" style="left:803px;top:110px;width:11px;height:11px;background:#1f1f1f"></div>
<div class="a" style="left:815px;top:110px;width:11px;height:11px;background:#000000"></div>
<div class="a" style="left:827px;top:110px;width:11px;height:11px;background:#f29b76"></div>
<div class="a" style="left:839px;top:110px;width:11px;height:11px;background:#f6b37f"></div>
<div class="a" style="left:851px;top:110px;width:11px;height:11px;background:#facd89"></div>
<div class="a" style="left:863px;top:110px;width:11px;height:11px;background:#fff799"></div>
<div class="a" style="left:659px;top:122px;width:11px;height:11px;background:#cce198"></div>
<div class="a" style="left:671px;top:122px;width:11px;height:11px;background:#acd598"></div>
<div class="a" style="left:683px;top:122px;width:11px;height:11px;background:#89c997"></div>
<div class="a" style="left:695px;top:122px;width:11px;height:11px;background:#84ccc9"></div>
<div class="a" style="left:707px;top:122px;width:11px;height:11px;background:#7ecef4"></div>
<div class="a" style="left:719px;top:122px;width:11px;height:11px;background:#88abda"></div>
<div class="a" style="left:731px;top:122px;width:11px;height:11px;background:#8c97cb"></div>
<div class="a" style="left:743px;top:122px;width:11px;height:11px;background:#8f82bc"></div>
<div class="a" style="left:755px;top:122px;width:11px;height:11px;background:#aa89bd"></div>
<div class="a" style="left:767px;top:122px;width:11px;height:11px;background:#c490bf"></div>
<div class="a" style="left:779px;top:122px;width:11px;height:11px;background:#f19ec2"></div>
<div class="a" style="left:791px;top:122px;width:11px;height:11px;background:#f29c9f"></div>
<div class="a" style="left:803px;top:122px;width:11px;height:11px;background:#ec6941"></div>
<div class="a" style="left:815px;top:122px;width:11px;height:11px;background:#f19149"></div>
<div class="a" style="left:827px;top:122px;width:11px;height:11px;background:#f8b551"></div>
<div class="a" style="left:839px;top:122px;width:11px;height:11px;background:#fff45c"></div>
<div class="a" style="left:851px;top:122px;width:11px;height:11px;background:#b3d465"></div>
<div class="a" style="left:863px;top:122px;width:11px;height:11px;background:#80c269"></div>
<div class="a" style="left:659px;top:134px;width:11px;height:11px;background:#32b16c"></div>
<div class="a" style="left:671px;top:134px;width:11px;height:11px;background:#13b5b1"></div>
<div class="a" style="left:683px;top:134px;width:11px;height:11px;background:#00b7ee"></div>
<div class="a" style="left:695px;top:134px;width:11px;height:11px;background:#448aca"></div>
<div class="a" style="left:707px;top:134px;width:11px;height:11px;background:#556fb5"></div>
<div class="a" style="left:719px;top:134px;width:11px;height:11px;background:#5f52a0"></div>
<div class="a" style="left:731px;top:134px;width:11px;height:11px;background:#8957a1"></div>
<div class="a" style="left:743px;top:134px;width:11px;height:11px;background:#ae5da1"></div>
<div class="a" style="left:755px;top:134px;width:11px;height:11px;background:#ea68a2"></div>
<div class="a" style="left:767px;top:134px;width:11px;height:11px;background:#eb6877"></div>
<div class="a" style="left:779px;top:134px;width:11px;height:11px;background:#e60012"></div>
<div class="a" style="left:791px;top:134px;width:11px;height:11px;background:#eb6100"></div>
<div class="a" style="left:803px;top:134px;width:11px;height:11px;background:#f39800"></div>
<div class="a" style="left:815px;top:134px;width:11px;height:11px;background:#fff100"></div>
<div class="a" style="left:827px;top:134px;width:11px;height:11px;background:#8fc31f"></div>
<div class="a" style="left:839px;top:134px;width:11px;height:11px;background:#22ac38"></div>
<div class="a" style="left:851px;top:134px;width:11px;height:11px;background:#009944"></div>
<div class="a" style="left:863px;top:134px;width:11px;height:11px;background:#009e96"></div>
<div class="a" style="left:659px;top:146px;width:11px;height:11px;background:#00a0e9"></div>
<div class="a" style="left:671px;top:146px;width:11px;height:11px;background:#0068b7"></div>
<div class="a" style="left:683px;top:146px;width:11px;height:11px;background:#00479d"></div>
<div class="a" style="left:695px;top:146px;width:11px;height:11px;background:#1d2088"></div>
<div class="a" style="left:707px;top:146px;width:11px;height:11px;background:#601986"></div>
<div class="a" style="left:719px;top:146px;width:11px;height:11px;background:#920783"></div>
<div class="a" style="left:731px;top:146px;width:11px;height:11px;background:#e4007f"></div>
<div class="a" style="left:743px;top:146px;width:11px;height:11px;background:#e5004f"></div>
<div class="a" style="left:755px;top:146px;width:11px;height:11px;background:#a40000"></div>
<div class="a" style="left:767px;top:146px;width:11px;height:11px;background:#a84200"></div>
<div class="a" style="left:779px;top:146px;width:11px;height:11px;background:#ac6a00"></div>
<div class="a" style="left:791px;top:146px;width:11px;height:11px;background:#b7aa00"></div>
<div class="a" style="left:803px;top:146px;width:11px;height:11px;background:#638c0b"></div>
<div class="a" style="left:815px;top:146px;width:11px;height:11px;background:#097c25"></div>
<div class="a" style="left:827px;top:146px;width:11px;height:11px;background:#007130"></div>
<div class="a" style="left:839px;top:146px;width:11px;height:11px;background:#00736d"></div>
<div class="a" style="left:851px;top:146px;width:11px;height:11px;background:#0075a9"></div>
<div class="a" style="left:863px;top:146px;width:11px;height:11px;background:#004986"></div>
<div class="a" style="left:659px;top:158px;width:11px;height:11px;background:#002e73"></div>
<div class="a" style="left:671px;top:158px;width:11px;height:11px;background:#100964"></div>
<div class="a" style="left:683px;top:158px;width:11px;height:11px;background:#440062"></div>
<div class="a" style="left:695px;top:158px;width:11px;height:11px;background:#6a005f"></div>
<div class="a" style="left:707px;top:158px;width:11px;height:11px;background:#a4005b"></div>
<div class="a" style="left:719px;top:158px;width:11px;height:11px;background:#a40035"></div>
<div class="a" style="left:731px;top:158px;width:11px;height:11px;background:#7d0000"></div>
<div class="a" style="left:743px;top:158px;width:11px;height:11px;background:#7f2d00"></div>
<div class="a" style="left:755px;top:158px;width:11px;height:11px;background:#834e00"></div>
<div class="a" style="left:767px;top:158px;width:11px;height:11px;background:#8a8000"></div>
<div class="a" style="left:779px;top:158px;width:11px;height:11px;background:#486a00"></div>
<div class="a" style="left:791px;top:158px;width:11px;height:11px;background:#005e15"></div>
<div class="a" style="left:803px;top:158px;width:11px;height:11px;background:#005524"></div>
<div class="a" style="left:815px;top:158px;width:11px;height:11px;background:#005752"></div>
<div class="a" style="left:827px;top:158px;width:11px;height:11px;background:#005982"></div>
<div class="a" style="left:839px;top:158px;width:11px;height:11px;background:#003567"></div>
<div class="a" style="left:851px;top:158px;width:11px;height:11px;background:#001c58"></div>
<div class="a" style="left:863px;top:158px;width:11px;height:11px;background:#03004c"></div>
<div class="a" style="left:659px;top:170px;width:11px;height:11px;background:#2e004b"></div>
<div class="a" style="left:671px;top:170px;width:11px;height:11px;background:#500047"></div>
<div class="a" style="left:683px;top:170px;width:11px;height:11px;background:#7e0043"></div>
<div class="a" style="left:695px;top:170px;width:11px;height:11px;background:#7d0022"></div>
<div class="a" style="left:707px;top:170px;width:11px;height:11px;background:#d9c6a4"></div>
<div class="a" style="left:719px;top:170px;width:11px;height:11px;background:#b09b81"></div>
<div class="a" style="left:731px;top:170px;width:11px;height:11px;background:#85705d"></div>
<div class="a" style="left:743px;top:170px;width:11px;height:11px;background:#5b4a3f"></div>
<div class="a" style="left:755px;top:170px;width:11px;height:11px;background:#3b302b"></div>
<div class="a" style="left:767px;top:170px;width:11px;height:11px;background:#d8ad74"></div>
<div class="a" style="left:779px;top:170px;width:11px;height:11px;background:#b58a57"></div>
<div class="a" style="left:791px;top:170px;width:11px;height:11px;background:#9a6c38"></div>
<div class="a" style="left:803px;top:170px;width:11px;height:11px;background:#83561f"></div>
<div class="a" style="left:815px;top:170px;width:11px;height:11px;background:#6b3f0e"></div>
<div class="a dk" style="left:659px;top:193px;width:240px;height:1px"></div><div class="a hl" style="left:659px;top:194px;width:240px;background:#606060"></div>
<svg style="left:831px;top:198px" width="11" height="11"><path d="M0,0H11V11H5V6H0Z" fill="#d2d2d2"/><path d="M0.5,7H4V10.5Z" fill="#e4e4e4"/></svg>
<svg style="left:859px;top:197px" width="11" height="12"><g fill="none" stroke="#8c8c8c" stroke-width="1.1"><path d="M0.5,3.5H10.5M3.5,3V1.3H7.5V3M1.5,4.5L2.2,11.4H8.8L9.5,4.5M3.6,5.5V10M5.5,5.5V10M7.4,5.5V10"/></g></svg>
<svg style="left:888px;top:200px" width="10" height="10"><g fill="#747474"><rect x="8" y="0" width="1" height="1"/><rect x="6" y="2" width="1" height="1"/><rect x="8" y="2" width="1" height="1"/><rect x="4" y="4" width="1" height="1"/><rect x="6" y="4" width="1" height="1"/><rect x="8" y="4" width="1" height="1"/><rect x="2" y="6" width="1" height="1"/><rect x="4" y="6" width="1" height="1"/><rect x="6" y="6" width="1" height="1"/><rect x="8" y="6" width="1" height="1"/><rect x="0" y="8" width="1" height="1"/><rect x="2" y="8" width="1" height="1"/><rect x="4" y="8" width="1" height="1"/><rect x="6" y="8" width="1" height="1"/><rect x="8" y="8" width="1" height="1"/></g></svg>
<div class="a" style="left:659px;top:212px;width:240px;height:3px;background:#2b2b2b"></div>
<div class="a tabrow" style="left:659px;top:215px;width:240px;height:17px"></div>
<div class="a tabon" style="left:659px;top:215px;width:40px;height:17px"></div>
<div class="a taboff" style="left:699px;top:215px;width:39px;height:17px"></div>
<div class="t tl" style="left:667px;top:215px">调整</div>
<div class="t tg" style="left:706px;top:215px">样式</div>
<svg style="left:881px;top:219px" width="14" height="9"><path d="M0,2.3H5.6L2.8,5.6Z" fill="#d8d8d8"/><path d="M6,0.5H14.3M6,2.5H14.3M6,4.5H14.3M6,6.5H14.3" stroke="#d4d4d4" stroke-width="1"/></svg>
<div class="a hl" style="left:699px;top:232px;width:200px;background:#5e5e5e"></div>
<div class="t" style="left:668px;top:237px;color:#fff">添加调整</div>
<svg width="0" height="0" style="left:0;top:0"><defs><linearGradient id="ag" x1="0" y1="0" x2="0" y2="1"><stop offset="0" stop-color="#dcdcdc"/><stop offset="1" stop-color="#9c9c9c"/></linearGradient><linearGradient id="agh" x1="0" y1="0" x2="1" y2="0"><stop offset="0" stop-color="#3a3a3a"/><stop offset="1" stop-color="#a8a8a8"/></linearGradient><linearGradient id="agd" x1="0" y1="0" x2="1" y2="1"><stop offset="0" stop-color="#8a8a8a"/><stop offset=".5" stop-color="#b5b5b5"/><stop offset="1" stop-color="#787878"/></linearGradient></defs></svg>
<svg style="left:707px;top:261px" width="18" height="18"><path d="M9,0.6V3.4" transform="rotate(0 9 9)" stroke="#c9c9c9" stroke-width="1.8"/><path d="M9,0.6V3.4" transform="rotate(45 9 9)" stroke="#c9c9c9" stroke-width="1.8"/><path d="M9,0.6V3.4" transform="rotate(90 9 9)" stroke="#c9c9c9" stroke-width="1.8"/><path d="M9,0.6V3.4" transform="rotate(135 9 9)" stroke="#c9c9c9" stroke-width="1.8"/><path d="M9,0.6V3.4" transform="rotate(180 9 9)" stroke="#c9c9c9" stroke-width="1.8"/><path d="M9,0.6V3.4" transform="rotate(225 9 9)" stroke="#c9c9c9" stroke-width="1.8"/><path d="M9,0.6V3.4" transform="rotate(270 9 9)" stroke="#c9c9c9" stroke-width="1.8"/><path d="M9,0.6V3.4" transform="rotate(315 9 9)" stroke="#c9c9c9" stroke-width="1.8"/><circle cx="9" cy="9" r="3.9" fill="none" stroke="#c9c9c9" stroke-width="1.3"/><path d="M9,5.1A3.9,3.9 0 0 1 9,12.9Z" fill="#c9c9c9"/></svg>
<svg style="left:730px;top:263px" width="20" height="12"><path d="M0.8,11.5V6L1.8,4.2L2.9,7L4,2.2L5.3,6.5L6.6,0.8L7.9,6L9,2.4L10,5.6L11.3,0.3L12.6,5.8L13.7,2.4L14.8,6.5L16.1,2.6L17.2,6.8L18.5,4V11.5Z" fill="url(#ag)"/></svg>
<svg style="left:756px;top:263px" width="17" height="15"><rect x="0.5" y="1.5" width="15.5" height="12.5" fill="#6a6a6a" stroke="#c9c9c9"/><path d="M0.5,5.7H16M0.5,9.8H16M5.7,1.5V14M10.9,1.5V14" stroke="#b0b0b0" stroke-width="0.9"/><path d="M0.5,13.5C7,13.5 8,9 9,6.5C10,3.5 12,1.5 16,1.5" fill="none" stroke="#e6e6e6" stroke-width="1.3"/><path d="M0,0.5H16.5" stroke="#3c3c3c"/></svg>
<svg style="left:780px;top:263px" width="17" height="15"><rect x="0.5" y="1.5" width="15.5" height="12.5" fill="#6a6a6a" stroke="#c9c9c9"/><path d="M1,13.5L15.5,2V13.5Z" fill="#bdbdbd"/><path d="M2.5,5.5H7M4.8,3.2V7.8" stroke="#e4e4e4" stroke-width="1.2"/><path d="M9.5,10.5H14" stroke="#555" stroke-width="1.3"/><path d="M0,0.5H16.5" stroke="#3c3c3c"/></svg>
<svg style="left:804px;top:263px" width="17" height="16"><path d="M0.3,1H16.7L8.5,15.5Z" fill="url(#ag)"/><path d="M0.3,1H16.7L8.5,15.5Z" fill="none" stroke="#cdcdcd" stroke-width=".8"/><path d="M4.5,3H12.5L8.5,10Z" fill="#8b8b8b" opacity=".6"/><path d="M0,0.3H17" stroke="#3c3c3c" stroke-width=".8"/></svg>
<svg style="left:696px;top:290px" width="17" height="14"><rect x="0.5" y="0.5" width="15.5" height="13" fill="#bdbdbd" stroke="#c9c9c9"/><rect x="1.5" y="1.5" width="13.5" height="4.6" fill="#9a9a9a"/><rect x="3" y="1.5" width="2.4" height="4.6" fill="#6e6e6e"/><rect x="7.4" y="1.5" width="2.4" height="4.6" fill="#c8c8c8"/><rect x="11" y="1.5" width="2.4" height="4.6" fill="#6e6e6e"/><rect x="1.5" y="7.6" width="13.5" height="5" fill="url(#agh)"/></svg>
<svg style="left:719px;top:289px" width="18" height="16"><path d="M9,0.3V4" stroke="#c9c9c9" stroke-width="2.6"/><path d="M6.5,3H11.5L9,6Z" fill="#c9c9c9"/><path d="M2,5H16" stroke="#c9c9c9" stroke-width="1.6"/><path d="M4,5.5L1,11.5M4,5.5L7,11.5M14,5.5L11,11.5M14,5.5L17,11.5" stroke="#c9c9c9" stroke-width="1" fill="none"/><path d="M0.2,11.5H7.8C7.5,14.5 0.5,14.5 0.2,11.5ZM10.2,11.5H17.8C17.5,14.5 10.5,14.5 10.2,11.5Z" fill="#c9c9c9"/></svg>
<svg style="left:744px;top:290px" width="17" height="14"><rect x="0.5" y="0.5" width="15.5" height="13" fill="#3f3f3f" stroke="#c9c9c9" stroke-width="1.2"/><rect x="7.6" y="1" width="8" height="12" fill="url(#ag)"/></svg>
<svg style="left:767px;top:289px" width="18" height="17"><path d="M0.5,2.5H3.5L4.5,0.8H9L10,2.5H14V10H0.5Z" fill="#c4c4c4"/><circle cx="7.3" cy="6" r="2.6" fill="#6a6a6a" stroke="#eee" stroke-width=".8"/><circle cx="12" cy="10.5" r="4.8" fill="#8d8d8d" fill-opacity=".85" stroke="#d4d4d4" stroke-width="1.1"/></svg>
<svg style="left:791px;top:289px" width="17" height="16"><circle cx="8.5" cy="5" r="4.6" fill="#cfcfcf"/><circle cx="5" cy="10.5" r="4.6" fill="#b0b0b0"/><circle cx="12" cy="10.5" r="4.6" fill="#b0b0b0"/><path d="M5.5,6.2H11.5L9.2,9.8V12.5H7.8V9.8Z" fill="#555"/></svg>
<svg style="left:816px;top:290px" width="17" height="14"><rect x="0.5" y="0.5" width="15.5" height="13" fill="#c6c6c6"/><g fill="#5a5a5a"><rect x="6.2" y="1.6" width="4" height="3"/><rect x="11.2" y="1.6" width="4" height="3"/><rect x="1.4" y="5.6" width="4" height="3"/><rect x="6.2" y="5.6" width="4" height="3"/><rect x="11.2" y="5.6" width="4" height="3"/><rect x="1.4" y="9.6" width="4" height="3"/><rect x="6.2" y="9.6" width="4" height="3"/><rect x="11.2" y="9.6" width="4" height="3"/></g><rect x="1.4" y="1.6" width="4" height="3" fill="#8a8a8a"/></svg>
<svg style="left:708px;top:317px" width="17" height="14"><path d="M0,0.5H17" stroke="#383838"/><rect x="0.5" y="1.5" width="15" height="12" fill="#8c8c8c" stroke="#c9c9c9" stroke-width="1.1"/><path d="M1,13L15.5,2V13Z" fill="#bdbdbd"/><ellipse cx="8.2" cy="7.5" rx="4.4" ry="3.4" fill="#5e5e5e" transform="rotate(-35 8.2 7.5)"/><path d="M1,13L15.5,2" stroke="#d8d8d8" stroke-width=".8"/></svg>
<svg style="left:732px;top:317px" width="17" height="14"><path d="M0,0.5H17" stroke="#383838"/><rect x="0.5" y="1.5" width="15" height="12" fill="#8c8c8c" stroke="#c9c9c9" stroke-width="1.1"/><rect x="1" y="2" width="14.5" height="11" fill="url(#agd)"/><path d="M1,9L12,2M3,13L15.5,5M9,13L15.5,9" stroke="#6c6c6c" stroke-width="1.6"/></svg>
<svg style="left:756px;top:317px" width="17" height="14"><path d="M0,0.5H17" stroke="#383838"/><rect x="0.5" y="1.5" width="15" height="12" fill="#8c8c8c" stroke="#c9c9c9" stroke-width="1.1"/><rect x="1" y="2" width="14.5" height="11" fill="#b9b9b9"/><path d="M1.5,8.5H4V6.8H7V5.2H10.5V3.6H14.5V5.5H11.5V7H8V8.6H5V10H1.5Z" fill="#4a4a4a"/><path d="M8,11.5H14.5V10H11Z" fill="#4a4a4a"/></svg>
<svg style="left:780px;top:317px" width="17" height="14"><path d="M0,0.5H17" stroke="#383838"/><rect x="0.5" y="1.5" width="15" height="12" fill="#8c8c8c" stroke="#c9c9c9" stroke-width="1.1"/><rect x="1" y="2" width="14.5" height="11" fill="#a9a9a9"/><path d="M1,2L8.2,7.5L1,13ZM15.5,2L8.2,7.5L15.5,13Z" fill="#7a7a7a"/><path d="M1,2L15.5,13M15.5,2L1,13" stroke="#c9c9c9" stroke-width=".7"/></svg>
<svg style="left:804px;top:317px" width="17" height="14"><path d="M0,0.5H17" stroke="#383838"/><rect x="0.5" y="1.5" width="15" height="12" fill="#8c8c8c" stroke="#c9c9c9" stroke-width="1.1"/><rect x="1" y="2" width="14.5" height="11" fill="url(#agh)"/></svg>
<div class="a" style="left:659px;top:343px;width:240px;height:4px;background:#2b2b2b"></div>
<div class="a tabrow" style="left:659px;top:347px;width:240px;height:17px"></div>
<div class="a tabon" style="left:659px;top:347px;width:40px;height:17px"></div>
<div class="a taboff" style="left:699px;top:347px;width:39px;height:17px"></div>
<div class="a taboff" style="left:738px;top:347px;width:40px;height:17px"></div>
<div class="t tl" style="left:667px;top:347px">图层</div>
<div class="t tg" style="left:706px;top:347px">通道</div>
<div class="t tg" style="left:746px;top:347px">路径</div>
<svg style="left:881px;top:351px" width="14" height="9"><path d="M0,2.3H5.6L2.8,5.6Z" fill="#d8d8d8"/><path d="M6,0.5H14.3M6,2.5H14.3M6,4.5H14.3M6,6.5H14.3" stroke="#d4d4d4" stroke-width="1"/></svg>
<div class="a hl" style="left:699px;top:364px;width:200px;background:#5e5e5e"></div>
<div class="a" style="left:663px;top:367px;width:71px;height:21px;border:1px solid #393939;border-radius:3px;background:linear-gradient(#5c5c5c,#4e4e4e)"></div>
<svg style="left:669px;top:372px" width="11" height="11"><circle cx="6.5" cy="4.5" r="3.2" fill="none" stroke="#a8a8a8" stroke-width="1.4"/><path d="M4,7L1,10" stroke="#a8a8a8" stroke-width="1.6"/></svg>
<div class="t" style="left:686px;top:370px;color:#b4b4b4">类型</div>
<svg style="left:723px;top:373px" width="7" height="11"><path d="M0.5,4L3.5,0.5L6.5,4ZM0.5,7L3.5,10.5L6.5,7Z" fill="#b4b4b4"/></svg>
<svg style="left:755px;top:372px" width="13" height="11"><rect x="0.5" y="0.5" width="12" height="10" fill="none" stroke="#868686"/><path d="M2,9L5,5.5L7,7.5L9,6L11,9Z" fill="#868686"/><circle cx="9.5" cy="3" r="1" fill="#868686"/></svg>
<svg style="left:780px;top:372px" width="11" height="11"><circle cx="5.5" cy="5.5" r="5" fill="#868686"/><path d="M2.4,8.6A4.4,4.4 0 0 0 8.6,2.4Z" fill="#666"/><path d="M2.2,8.8L8.8,2.2" stroke="#a2a2a2" stroke-width=".9"/></svg>
<div class="t" style="left:803px;top:367px;font-family:'Liberation Serif',serif;font-size:15px;font-weight:bold;color:#868686;line-height:18px;height:18px">T</div>
<svg style="left:828px;top:372px" width="12" height="12"><rect x="1.5" y="1.5" width="9" height="9" fill="none" stroke="#868686" stroke-width="1.2"/><g fill="#535353" stroke="#868686"><rect x="0.5" y="0.5" width="2" height="2"/><rect x="9.5" y="0.5" width="2" height="2"/><rect x="0.5" y="9.5" width="2" height="2"/><rect x="9.5" y="9.5" width="2" height="2"/></g></svg>
<svg style="left:852px;top:371px" width="12" height="13"><path d="M3.5,0.5H8L11.5,4V10.5H3.5Z" fill="none" stroke="#868686"/><path d="M8,0.5V4H11.5" fill="none" stroke="#868686"/><rect x="0" y="6" width="6" height="6.5" fill="#868686"/></svg>
<div class="a" style="left:886px;top:369px;width:9px;height:17px;border:1px solid #3c3c3c;background:linear-gradient(#747474 0,#666 46%,#3a3a3a 46%,#3a3a3a 52%,#474747 52%,#474747 100%)"></div>
<div class="a dk" style="left:659px;top:391px;width:240px;height:1px;background:#383838"></div><div class="a hl" style="left:659px;top:392px;width:240px;background:#5e5e5e"></div>
<div class="a" style="left:663px;top:395px;width:111px;height:21px;border:1px solid #393939;border-radius:3px;background:linear-gradient(#606060,#4f4f4f)"></div>
<div class="t" style="left:672px;top:398px;color:#cfcfcf">正常</div>
<svg style="left:763px;top:401px" width="7" height="11"><path d="M0.5,4L3.5,0.5L6.5,4ZM0.5,7L3.5,10.5L6.5,7Z" fill="#c8c8c8"/></svg>
<div class="t" style="left:782px;top:398px;color:#cfcfcf">不透明度:</div>
<div class="a" style="left:839px;top:396px;width:56px;height:20px;border:1px solid #3c3c3c;border-radius:0 3px 3px 0;background:linear-gradient(90deg,#484848 0,#484848 35px,#3c3c3c 35px,#3c3c3c 36px,#5e5e5e 36px)"></div>
<div class="t" style="left:842px;top:397px;color:#7c7c7c;font-size:11px">100%</div>
<svg style="left:882px;top:405px" width="6" height="4"><path d="M0,0H6L3,3.6Z" fill="#cdcdcd"/></svg>
<div class="a" style="left:839px;top:424px;width:56px;height:20px;border:1px solid #3c3c3c;border-radius:0 3px 3px 0;background:linear-gradient(90deg,#484848 0,#484848 35px,#3c3c3c 35px,#3c3c3c 36px,#5e5e5e 36px)"></div>
<div class="t" style="left:842px;top:425px;color:#7c7c7c;font-size:11px">100%</div>
<svg style="left:882px;top:433px" width="6" height="4"><path d="M0,0H6L3,3.6Z" fill="#cdcdcd"/></svg>
<div class="a dk" style="left:659px;top:419px;width:240px;height:1px;background:#383838"></div><div class="a hl" style="left:659px;top:420px;width:240px;background:#5e5e5e"></div>
<div class="t" style="left:666px;top:425px;color:#b6b6b6">锁定:</div>
<svg style="left:703px;top:429px" width="11" height="11"><rect x="0" y="0" width="11" height="11" fill="#909090"/><g fill="#6a6a6a"><rect x="1" y="1" width="3" height="3"/><rect x="7" y="1" width="3" height="3"/><rect x="4" y="4" width="3" height="3"/><rect x="1" y="7" width="3" height="3"/><rect x="7" y="7" width="3" height="3"/></g></svg>
<svg style="left:723px;top:426px" width="17" height="14"><path d="M15.6,1.2L8.6,9.6" stroke="#909090" stroke-width="2.6" stroke-linecap="round"/><path d="M0.3,12.6C2,12.4 3,11.6 4,10.2C5.2,8.4 8.2,8.2 9.6,10.4C10,13 6.5,14.4 3.8,14C2.4,13.8 1,13.2 0.3,12.6Z" fill="#909090"/></svg>
<svg style="left:746px;top:426px" width="13" height="14"><path d="M6.5,0L9.6,3.8H3.4ZM6.5,14L9.6,10.2H3.4ZM-0.5,7L3.3,3.9V10.1ZM13.5,7L9.7,3.9V10.1Z" fill="#909090"/><path d="M6.5,3V11M2.5,7H10.5" stroke="#909090" stroke-width="1.4"/></svg>
<svg style="left:770px;top:428px" width="10" height="12"><rect x="0" y="5" width="10" height="7" rx="1" fill="#909090"/><path d="M2.3,5V3.5A2.7,2.7 0 0 1 7.7,3.5V5" fill="none" stroke="#909090" stroke-width="1.6"/><rect x="4.3" y="7.5" width="1.4" height="2.2" fill="#535353"/></svg>
<div class="t" style="left:806px;top:425px;color:#cfcfcf">填充:</div>
<div class="a dk" style="left:659px;top:449px;width:240px;height:1px;background:#333"></div>
<div class="a" style="left:659px;top:450px;width:225px;height:217px;background:#454545"></div>
<div class="a" style="left:884px;top:450px;width:15px;height:217px;background:linear-gradient(90deg,#3a3a3a,#454545)"></div>
<div class="a" style="left:659px;top:450px;width:30px;height:39px;background:#535353"></div>
<div class="a" style="left:689px;top:450px;width:1px;height:39px;background:#3a3a3a"></div>
<div class="a" style="left:690px;top:450px;width:194px;height:39px;background:#596678"></div>
<div class="a" style="left:659px;top:489px;width:225px;height:1px;background:#343434"></div>
<svg style="left:668px;top:464px" width="13" height="9"><path d="M0.3,4.5C3,-0.7 10,-0.7 12.7,4.5C10,9.7 3,9.7 0.3,4.5Z" fill="#b9b9b9"/><circle cx="6.5" cy="4.3" r="2.6" fill="#535353"/><circle cx="5.6" cy="3.4" r="0.9" fill="#b9b9b9"/></svg>
<div class="a" style="left:693px;top:453px;width:32px;height:32px;background:#000"></div>
<svg style="left:694px;top:454px;overflow:hidden" width="30" height="30" viewBox="0 0 317 317"><use href="#bunny"/></svg>
<div class="t" style="left:737px;top:461px;color:#fff;font-style:italic;font-size:11.5px;font-weight:bold">背景</div>
<svg style="left:857px;top:462px" width="11" height="13"><rect x="0.6" y="5.6" width="9.8" height="6.8" rx="1" fill="none" stroke="#dedede" stroke-width="1.2"/><path d="M2.8,5.5V3.6A2.7,2.7 0 0 1 8.2,3.6V5.5" fill="none" stroke="#dedede" stroke-width="1.3"/><rect x="4.7" y="7.6" width="1.6" height="2.8" fill="#dedede"/></svg>
<div class="a dk" style="left:659px;top:667px;width:240px;height:1px"></div><div class="a hl" style="left:659px;top:668px;width:240px;background:#666"></div>
<div class="a dk" style="left:619px;top:686px;width:281px;height:1px"></div>
<svg style="left:696px;top:673px" width="15" height="9"><g fill="none" stroke="#8e8e8e" stroke-width="1.5"><path d="M6,1H4A3.3,3.3 0 0 0 4,7.6H6M9,1H11A3.3,3.3 0 0 1 11,7.6H9M4.5,4.3H10.5"/></g></svg>
<div class="t" style="left:724px;top:669px;color:#818181;font-style:italic;font-size:15px;line-height:16px;letter-spacing:-0.5px">fx</div>
<svg style="left:739px;top:682px" width="4" height="3"><path d="M0,0H4L2,2.5Z" fill="#777"/></svg>
<svg style="left:751px;top:672px" width="14" height="11"><rect width="14" height="11" fill="#b8b8b8"/><circle cx="7" cy="5.5" r="2.8" fill="#4a4a4a"/></svg>
<svg style="left:778px;top:671px" width="19" height="14"><circle cx="6" cy="6" r="5.2" fill="#c4c4c4"/><path d="M2.6,9.6A4.9,4.9 0 0 1 9.6,2.6Z" fill="#535353"/><circle cx="6" cy="6" r="5.2" fill="none" stroke="#c4c4c4" stroke-width="1.2"/><path d="M14.5,11H18.5L16.5,13.5Z" fill="#e0e0e0"/></svg>
<svg style="left:804px;top:671px" width="14" height="11"><path d="M0,0.5H5.5L7,2.5H14V11H0Z" fill="#bdbdbd"/></svg>
<svg style="left:833px;top:672px" width="11" height="11"><path d="M0,0H11V11H5V6H0Z" fill="#d2d2d2"/><path d="M0.5,7H4V10.5Z" fill="#e4e4e4"/></svg>
<svg style="left:859px;top:671px" width="11" height="12"><g fill="none" stroke="#808080" stroke-width="1.1"><path d="M0.5,3.5H10.5M3.5,3V1.3H7.5V3M1.5,4.5L2.2,11.4H8.8L9.5,4.5M3.6,5.5V10M5.5,5.5V10M7.4,5.5V10"/></g></svg>

</body></html>
